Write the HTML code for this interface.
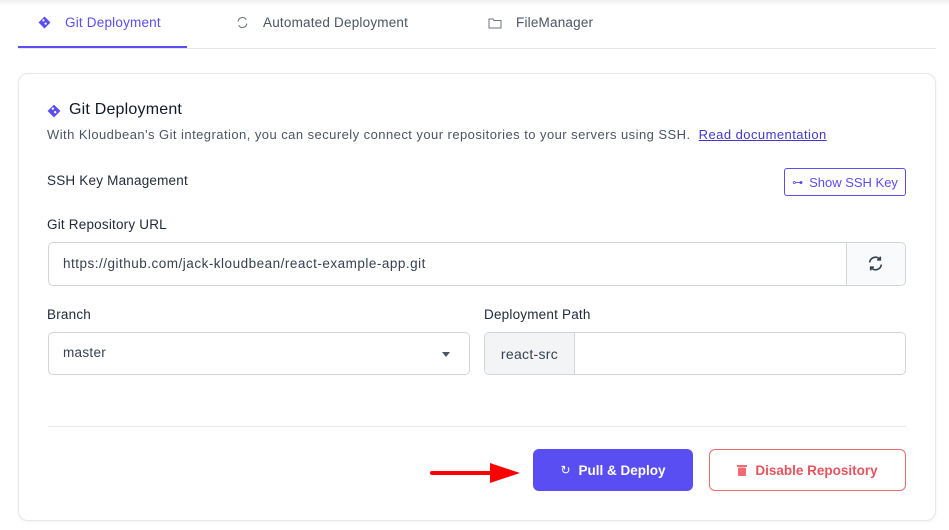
<!DOCTYPE html>
<html><head><style>
*{box-sizing:border-box;margin:0;padding:0}
body{width:949px;height:530px;background:#fff;font-family:"Liberation Sans",sans-serif;position:relative;overflow:hidden;color:#1f2937}
.a{position:absolute}
.tab{position:absolute;top:15px;font-size:13.5px;color:#4b5563;display:flex;align-items:center;gap:14px;letter-spacing:.2px}
.lbl{position:absolute;font-size:13.5px;color:#1f2937;letter-spacing:.2px}
.box{position:absolute;border:1px solid #d1d5db;border-radius:5px;background:#fff}
</style></head><body>
<div class="a" style="left:0;top:0;width:949px;height:6px;background:linear-gradient(#f0f0f0,#fff)"></div>
<div class="tab" style="left:38px;color:#5b4ef0">
<svg width="13" height="13" viewBox="0 0 12 12"><path d="M6 0.5L11.5 6 6 11.5 0.5 6Z" fill="#5b4ef0"/><circle cx="5" cy="4" r="1" fill="#fff"/><circle cx="7" cy="7" r="1" fill="#fff"/></svg>Git Deployment</div>
<div class="tab" style="left:236px"><svg width="13" height="13" viewBox="0 0 12 12" fill="none" stroke="#6b7280" stroke-width="1"><path d="M2 5a4 4 0 0 1 7.5-1.5M10 7a4 4 0 0 1-7.5 1.5"/></svg>Automated Deployment</div>
<div class="tab" style="left:488px"><svg width="14" height="12" viewBox="0 0 14 12" fill="none" stroke="#6b7280"><path d="M1 2h4l1 1.5h7V11H1Z"/></svg>FileManager</div>
<div class="a" style="left:18px;top:48px;width:918px;height:1px;background:#e5e7eb"></div>
<div class="a" style="left:18px;top:46px;width:169px;height:2px;background:#5b4ef0"></div>
<div class="a" style="left:18px;top:73px;width:918px;height:448px;border:1px solid #e5e7eb;border-radius:10px;box-shadow:0 1px 3px rgba(0,0,0,.05)"></div>
<svg class="a" style="left:47px;top:104px" width="14" height="14" viewBox="0 0 12 12"><path d="M6 0.5L11.5 6 6 11.5 0.5 6Z" fill="#5b4ef0"/><circle cx="5" cy="4" r="1" fill="#fff"/><circle cx="7" cy="7" r="1" fill="#fff"/></svg>
<div class="a" style="left:69px;top:101px;font-size:16px;color:#111827;letter-spacing:.2px">Git Deployment</div>
<div class="a" style="left:47px;top:127px;font-size:13px;color:#4b5563;letter-spacing:.45px;white-space:nowrap">With Kloudbean's Git integration, you can securely connect your repositories to your servers using SSH. &nbsp;<span style="color:#4338ca;text-decoration:underline">Read documentation</span></div>
<div class="lbl" style="left:47px;top:173px">SSH Key Management</div>
<div class="a" style="left:784px;top:168px;width:122px;height:28px;border:1px solid #5b4ef0;border-radius:3px;color:#5b4ef0;font-size:13px;display:flex;align-items:center;justify-content:center;gap:6px"><span style="font-size:11px">⊶</span>Show SSH Key</div>
<div class="lbl" style="left:47px;top:217px">Git Repository URL</div>
<div class="box" style="left:48px;top:242px;width:858px;height:44px"></div>
<div class="a" style="left:846px;top:243px;width:59px;height:42px;background:#f9fafb;border-left:1px solid #d1d5db;border-radius:0 5px 5px 0"></div>
<svg class="a" style="left:867px;top:255px" width="17" height="17" viewBox="0 0 16 16" fill="none" stroke="#374151" stroke-width="1.6"><path d="M2.5 7a5.5 5.5 0 0 1 10-2.5M13.5 9a5.5 5.5 0 0 1-10 2.5M12.5 1.5v3h-3M3.5 14.5v-3h3"/></svg>
<div class="a" style="left:63px;top:256px;font-size:13.5px;color:#374151;letter-spacing:.5px">https://github.com/jack-kloudbean/react-example-app.git</div>
<div class="lbl" style="left:47px;top:307px">Branch</div>
<div class="lbl" style="left:484px;top:307px">Deployment Path</div>
<div class="box" style="left:48px;top:332px;width:422px;height:43px"></div>
<div class="a" style="left:63px;top:345px;font-size:13.5px;color:#374151;letter-spacing:.3px">master</div>
<div class="a" style="left:442px;top:352px;border:4px solid transparent;border-top:5px solid #4b5563"></div>
<div class="box" style="left:484px;top:332px;width:422px;height:43px"></div>
<div class="a" style="left:485px;top:333px;width:90px;height:41px;background:#f3f4f6;border-right:1px solid #d1d5db;border-radius:5px 0 0 5px;font-size:14px;color:#374151;display:flex;align-items:center;justify-content:center;letter-spacing:.3px">react-src</div>
<div class="a" style="left:48px;top:426px;width:858px;height:1px;background:#e5e7eb"></div>
<div class="a" style="left:430px;top:471px;width:65px;height:4px;background:#f00;border-radius:2px"></div>
<div class="a" style="left:490px;top:463px;border-left:30px solid #f00;border-top:10px solid transparent;border-bottom:10px solid transparent"></div>
<div class="a" style="left:533px;top:449px;width:160px;height:42px;background:#584ef2;border-radius:6px;color:#fff;font-size:13.5px;font-weight:bold;display:flex;align-items:center;justify-content:center;gap:8px"><span style="font-weight:normal;font-size:12px">↻</span>Pull &amp; Deploy</div>
<div class="a" style="left:709px;top:449px;width:197px;height:42px;border:1px solid #ef6b73;border-radius:6px;color:#e5545e;font-size:13.5px;font-weight:bold;display:flex;align-items:center;justify-content:center;gap:8px"><svg width="10" height="12" viewBox="0 0 10 12"><rect x="0" y="1" width="10" height="2" fill="#ef6b73"/><rect x="1" y="3.5" width="8" height="8.5" rx="1" fill="#ef6b73"/></svg>Disable Repository</div>
</body></html>
